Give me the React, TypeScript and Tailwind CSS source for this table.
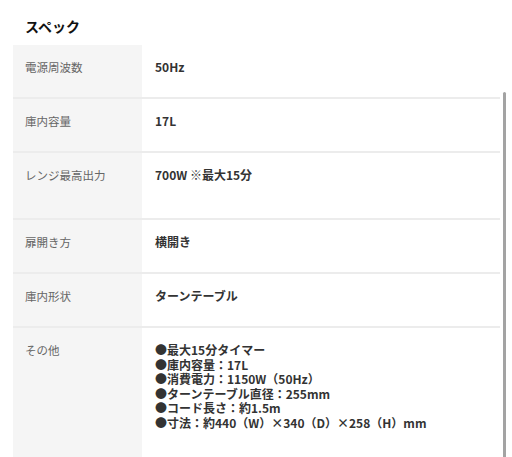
const specs = [
  { label: '電源周波数', value: ['50Hz'], h: 'h-[54px]' },
  { label: '庫内容量', value: ['17L'], h: 'h-[54px]' },
  { label: 'レンジ最高出力', value: ['700W ※最大15分'], h: 'h-[67px]' },
  { label: '扉開き方', value: ['横開き'], h: 'h-[54px]' },
  { label: '庫内形状', value: ['ターンテーブル'], h: 'h-[54px]' },
]

const others = [
  '●最大15分タイマー',
  '●庫内容量：17L',
  '●消費電力：1150W（50Hz）',
  '●ターンテーブル直径：255mm',
  '●コード長さ：約1.5m',
  '●寸法：約440（W）×340（D）×258（H）mm',
]

export default function App() {
  return (
    <div className="relative h-[457px] w-[512px] overflow-hidden bg-white font-['Noto_Sans_CJK_JP','Noto_Sans',sans-serif] text-[#333]">
      <h2 className="pl-[25px] pt-[16px] text-[14px] font-bold leading-[20px] text-[#111]">スペック</h2>

      <div className="ml-[13px] mr-[12px] mt-[9px] flex flex-col">
        {specs.map((s) => (
          <div key={s.label} className={`grid grid-cols-[129px_1fr] border-b-2 border-[#ececec] ${s.h}`}>
            <div className="bg-[#f5f5f5] pl-[12px] pt-[13px] text-[11.5px] leading-[18px] text-[#666]">{s.label}</div>
            <div className="pl-[13px] pt-[13px] text-[12px] font-semibold leading-[18px]">
              {s.value.map((v) => (
                <div key={v}>{v}</div>
              ))}
            </div>
          </div>
        ))}
        <div className="grid h-[140px] grid-cols-[129px_1fr]">
          <div className="bg-[#f5f5f5] pl-[12px] pt-[13px] text-[11.5px] leading-[18px] text-[#666]">その他</div>
          <div className="pl-[13px] pt-[15px] text-[12px] font-semibold leading-[14.5px]">
            {others.map((o) => (
              <div key={o}>{o}</div>
            ))}
          </div>
        </div>
      </div>

      <div className="absolute right-[6px] top-[92px] h-[370px] w-[3px] rounded-full bg-[#a3a3a3]" />
    </div>
  )
}
